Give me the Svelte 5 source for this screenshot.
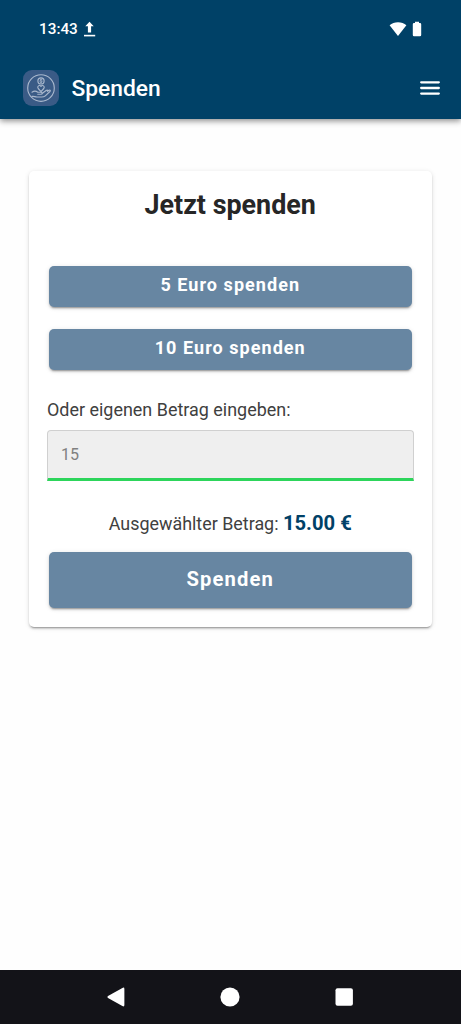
<script lang="ts">
  const presets = [5, 10];

  let selected = $state(15);
  let amount = $state('');

  function choose(value: number) {
    selected = value;
    amount = '';
  }

  function handleInput() {
    const value = parseFloat(amount);
    if (value > 0) {
      selected = value;
    }
  }
</script>

<div class="screen">
  <header class="header">
    <div class="status-bar">
      <span class="time">13:43</span>
      <svg class="upload" width="12" height="16" viewBox="0 0 12 16" fill="#fff">
        <path d="M5.5 0.8 L9.7 5.2 H7.1 V11.4 H3.9 V5.2 H1.3 Z" />
        <rect x="0" y="13.8" width="11.2" height="1.6" />
      </svg>
      <svg class="wifi" width="18" height="16" viewBox="0 0 18 16" fill="#fff">
        <path d="M9 1.2 C5.8 1.2 2.8 2.3 0.6 4.2 L9 14.9 L17.4 4.2 C15.2 2.3 12.2 1.2 9 1.2 Z" />
      </svg>
      <svg class="battery" width="10" height="16" viewBox="0 0 10 16" fill="#fff">
        <path d="M3 0.8 H7 V2 H8 Q9.2 2 9.2 3.2 V14 Q9.2 15.2 8 15.2 H2 Q0.8 15.2 0.8 14 V3.2 Q0.8 2 2 2 H3 Z" />
      </svg>
    </div>

    <div class="toolbar">
      <div class="logo">
        <svg width="36" height="36" viewBox="0 0 36 36" fill="none" stroke="#a9b8cd" stroke-width="1.15" stroke-linecap="round" stroke-linejoin="round">
          <circle cx="18" cy="18" r="13.3" />
          <circle cx="18" cy="10.9" r="3.1" />
          <path d="M19.2 9.7 C18.4 9 16.9 9.4 17.1 10.3 C17.3 11.1 19 10.8 19.1 11.7 C19.1 12.6 17.5 12.7 16.8 12 M18 8.8 V13" stroke-width="0.8" />
          <path d="M18 21.6 L15.2 18.5 C13.7 16.4 16.5 14.2 18 16.4 C19.5 14.2 22.3 16.4 20.8 18.5 Z" />
          <path d="M9 22.2 C11.2 20.8 13 20.9 14.7 22.2 H18 C19.7 22.2 19.7 24.2 18 24.2 H14.8" />
          <path d="M19.4 23.2 L23.1 20.5 C24.3 19.7 25.2 20.5 24.4 21.4 L26 20.2 C27.2 19.6 27.8 20.6 26.9 21.5 L22.3 25.8 C21.2 26.8 20.2 27 18.7 27 H14 C12 27 11 26 9 26.4" />
        </svg>
      </div>
      <h1 class="title">Spenden</h1>
      <button class="menu" aria-label="Menü">
        <svg width="20" height="16" viewBox="0 0 20 16" stroke="#fff" stroke-width="2.3" stroke-linecap="round">
          <path d="M1.2 2.3 H18.8 M1.2 8 H18.8 M1.2 13.6 H18.8" />
        </svg>
      </button>
    </div>
  </header>

  <main class="content">
    <section class="card">
      <h2 class="card-title">Jetzt spenden</h2>

      {#each presets as preset}
        <button class="button" onclick={() => choose(preset)}>{preset} Euro spenden</button>
      {/each}

      <label class="label" for="amount">Oder eigenen Betrag eingeben:</label>
      <input id="amount" class="amount" inputmode="decimal" placeholder="15" bind:value={amount} oninput={handleInput} />

      <p class="selected">Ausgewählter Betrag: <strong>{selected.toFixed(2)} €</strong></p>

      <button class="button submit">Spenden</button>
    </section>
  </main>

  <nav class="nav-bar">
    <svg width="20" height="20" viewBox="0 0 20 20" fill="#fff">
      <path d="M16.4 0.9 Q18.4 0 18.4 2 V18 Q18.4 20 16.4 19.1 L2 11 Q0.6 10 2 9 Z" />
    </svg>
    <svg width="20" height="20" viewBox="0 0 20 20" fill="#fff">
      <circle cx="10" cy="10" r="9.6" />
    </svg>
    <svg width="20" height="20" viewBox="0 0 20 20" fill="#fff">
      <rect x="1.5" y="1.3" width="17.4" height="17.4" rx="2" />
    </svg>
  </nav>
</div>

<style>
  .screen {
    display: flex;
    flex-direction: column;
    width: 461px;
    height: 1024px;
    overflow: hidden;
    background: #fefefe;
    font-family: Roboto, sans-serif;
    color: #404040;
  }

  .header {
    height: 119px;
    flex-shrink: 0;
    box-sizing: border-box;
    background: #004167;
    color: #fff;
    box-shadow: 0 2px 6px rgba(0, 0, 0, 0.45);
  }

  .status-bar {
    display: flex;
    align-items: center;
    height: 57px;
    padding: 0 39px;
  }

  .time {
    font-size: 15.3px;
    font-weight: 500;
    line-height: 20px;
  }

  .upload {
    margin-left: 6px;
  }

  .wifi {
    margin-left: auto;
  }

  .battery {
    margin-left: 5px;
  }

  .toolbar {
    display: flex;
    align-items: center;
    height: 62px;
    padding: 0 21px 0 22.5px;
  }

  .logo {
    width: 36px;
    height: 36px;
    border-radius: 9px;
    background: #3a5b86;
  }

  .title {
    margin: 0 0 0 13px;
    padding-top: 1px;
    font-size: 22.8px;
    font-weight: 500;
    line-height: 30px;
  }

  .menu {
    display: flex;
    margin-left: auto;
    padding: 0;
    border: none;
    background: none;
    cursor: pointer;
  }

  .content {
    flex: 1;
    padding: 51.5px 29px 0;
  }

  .card {
    display: flex;
    flex-direction: column;
    box-sizing: border-box;
    height: 456px;
    padding: 18px 18.5px 0 18px;
    border-radius: 5px;
    background: #fff;
    box-shadow: 0 3px 1px -2px rgba(0, 0, 0, 0.2), 0 2px 2px rgba(0, 0, 0, 0.14), 0 1px 5px rgba(0, 0, 0, 0.12);
  }

  .card-title {
    margin: 0 0 45px;
    font-size: 26.9px;
    font-weight: 700;
    line-height: 32px;
    text-align: center;
    color: #262626;
  }

  .button {
    flex-shrink: 0;
    height: 41px;
    margin: 0 2px 22px;
    padding: 0 0 3px;
    border: none;
    border-radius: 5px;
    background: #6786a2;
    color: #fff;
    font-family: inherit;
    font-size: 18px;
    font-weight: 700;
    letter-spacing: 1.05px;
    box-shadow: 0 3px 1px -2px rgba(0, 0, 0, 0.2), 0 2px 2px rgba(0, 0, 0, 0.14), 0 1px 5px rgba(0, 0, 0, 0.12);
    cursor: pointer;
  }

  .label {
    margin-top: 6.5px;
    font-size: 17.95px;
    line-height: 24px;
  }

  .amount {
    flex-shrink: 0;
    height: 51px;
    box-sizing: border-box;
    margin: 8px 0 0;
    padding: 0 13px;
    border: 1px solid #d0d0d0;
    border-bottom: 3px solid #2dd55b;
    border-radius: 4px 4px 0 0;
    outline: none;
    background: #efefef;
    font-family: inherit;
    font-size: 16px;
    color: #404040;
  }

  .amount::placeholder {
    color: #808080;
  }

  .selected {
    margin: 29px 0 14.5px;
    font-size: 17.9px;
    line-height: 26px;
    text-align: center;
  }

  .selected strong {
    font-size: 20.2px;
    color: #004167;
  }

  .submit {
    height: 56px;
    margin-bottom: 0;
    padding-bottom: 2px;
    font-size: 20.2px;
    letter-spacing: 1.1px;
  }

  .nav-bar {
    display: flex;
    justify-content: center;
    align-items: center;
    gap: 94px;
    height: 54px;
    flex-shrink: 0;
    padding-right: 1px;
    box-sizing: border-box;
    background: #131318;
  }
</style>
